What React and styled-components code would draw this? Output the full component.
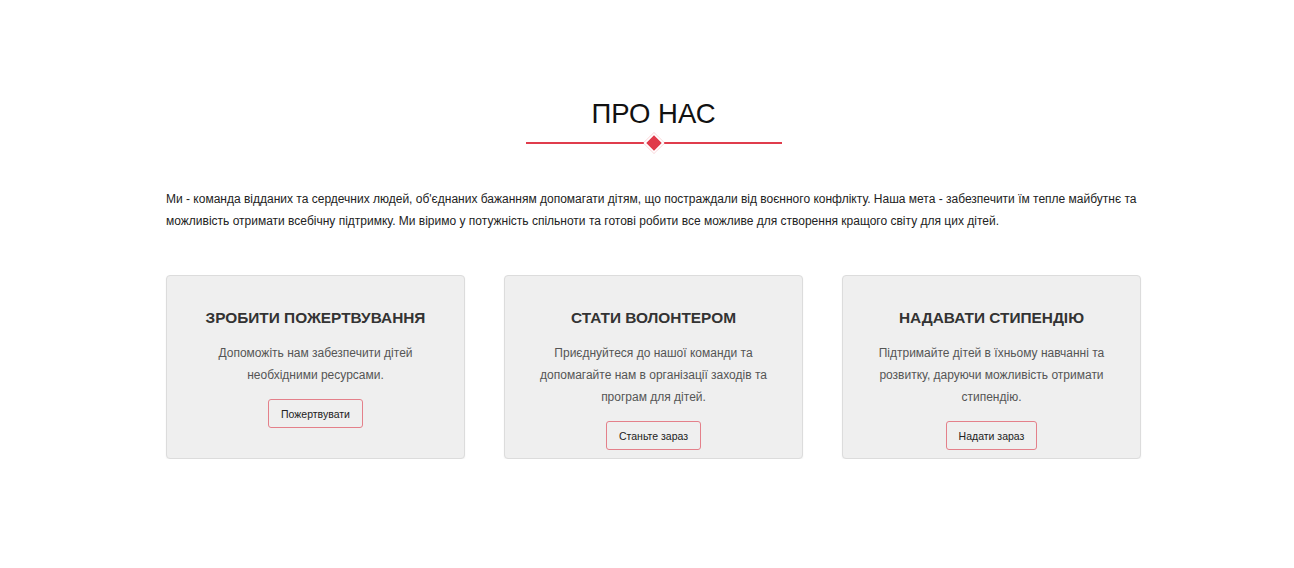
import React from "react";
import styled, { createGlobalStyle } from "styled-components";

const GlobalStyle = createGlobalStyle`
    body {
        margin: 0;
        background: #ffffff;
        font-family: "Liberation Sans", Arial, sans-serif;
    }
`;

const Section = styled.section`
    width: 975px;
    margin: 0 0 0 166px;
    padding: 95px 0 0;
`;

const Title = styled.h2`
    margin: 0;
    text-align: center;
    font-size: 27.5px;
    font-weight: 400;
    line-height: 38px;
    color: #111;
`;

const Divider = styled.div`
    width: 256px;
    height: 2px;
    margin: 9px auto 0;
    background: #e03c4c;
    position: relative;
`;

const Diamond = styled.span`
    position: absolute;
    left: 50%;
    top: 50%;
    width: 11px;
    height: 11px;
    background: #e03a4a;
    border: 2px solid #fff;
    transform: translate(-50%, -50%) rotate(45deg);
`;

const Intro = styled.p`
    margin: 44px 0 0;
    font-size: 12px;
    line-height: 22px;
    color: #222;
`;

const Cards = styled.div`
    display: grid;
    grid-template-columns: repeat(3, 1fr);
    gap: 39px;
    margin-top: 43px;
`;

const Card = styled.div`
    background: #efefef;
    border: 1px solid #dcdcdc;
    border-radius: 4px;
    box-shadow: 0 1px 2px rgba(0, 0, 0, 0.06);
    padding: 32px 30px 8px;
    text-align: center;
    min-height: 184px;
    box-sizing: border-box;
`;

const CardTitle = styled.h3`
    margin: 0;
    font-size: 15.4px;
    font-weight: 700;
    line-height: 19px;
    color: #333;
`;

const CardText = styled.p`
    margin: 15px 0 0;
    font-size: 12px;
    line-height: 22px;
    color: #555;
`;

const Button = styled.button`
    margin-top: 13px;
    height: 29px;
    padding: 0 12px;
    background: transparent;
    border: 1px solid #e4808a;
    border-radius: 3px;
    font-family: "Liberation Sans", Arial, sans-serif;
    font-size: 10.5px;
    color: #222;
    cursor: pointer;
`;

const items = [
    {
        title: "ЗРОБИТИ ПОЖЕРТВУВАННЯ",
        text: ["Допоможіть нам забезпечити дітей", "необхідними ресурсами."],
        action: "Пожертвувати",
    },
    {
        title: "СТАТИ ВОЛОНТЕРОМ",
        text: ["Приєднуйтеся до нашої команди та", "допомагайте нам в організації заходів та", "програм для дітей."],
        action: "Станьте зараз",
    },
    {
        title: "НАДАВАТИ СТИПЕНДІЮ",
        text: ["Підтримайте дітей в їхньому навчанні та", "розвитку, даруючи можливість отримати", "стипендію."],
        action: "Надати зараз",
    },
];

const App = () => {
    return (
        <>
        <GlobalStyle />
        <Section>
            <Title>ПРО НАС</Title>
            <Divider>
                <Diamond />
            </Divider>
            <Intro>
                Ми - команда відданих та сердечних людей, об'єднаних бажанням допомагати дітям, що постраждали від воєнного конфлікту. Наша мета - забезпечити їм тепле майбутнє та можливість отримати всебічну підтримку. Ми віримо у потужність спільноти та готові робити все можливе для створення кращого світу для цих дітей.
            </Intro>
            <Cards>
                {items.map((item) => (
                    <Card key={item.title}>
                        <CardTitle>{item.title}</CardTitle>
                        <CardText>
                            {item.text.map((line, i) => (
                                <React.Fragment key={i}>
                                    {line}
                                    {i < item.text.length - 1 && <br />}
                                </React.Fragment>
                            ))}
                        </CardText>
                        <Button>{item.action}</Button>
                    </Card>
                ))}
            </Cards>
        </Section>
        </>
    );
};

export default App;
